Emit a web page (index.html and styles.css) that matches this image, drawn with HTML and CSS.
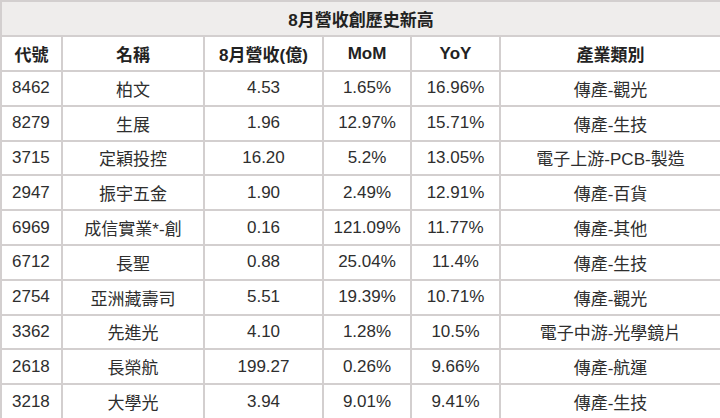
FILE: index.html
```html
<!DOCTYPE html>
<html lang="zh-Hant">
<head>
<meta charset="utf-8">
<link rel="stylesheet" href="styles.css">
</head>
<body>
<table class="tbl">
  <colgroup>
    <col class="c1"><col class="c2"><col class="c3"><col class="c4"><col class="c5"><col class="c6">
  </colgroup>
  <thead>
    <tr class="title"><th colspan="6">8月營收創歷史新高</th></tr>
    <tr class="head"><th>代號</th><th>名稱</th><th>8月營收(億)</th><th>MoM</th><th>YoY</th><th>產業類別</th></tr>
  </thead>
  <tbody>
    <tr><td class="code">8462</td><td>柏文</td><td>4.53</td><td>1.65%</td><td>16.96%</td><td>傳產-觀光</td></tr>
    <tr><td class="code">8279</td><td>生展</td><td>1.96</td><td>12.97%</td><td>15.71%</td><td>傳產-生技</td></tr>
    <tr><td class="code">3715</td><td>定穎投控</td><td>16.20</td><td>5.2%</td><td>13.05%</td><td>電子上游-PCB-製造</td></tr>
    <tr><td class="code">2947</td><td>振宇五金</td><td>1.90</td><td>2.49%</td><td>12.91%</td><td>傳產-百貨</td></tr>
    <tr><td class="code">6969</td><td>成信實業*-創</td><td>0.16</td><td>121.09%</td><td>11.77%</td><td>傳產-其他</td></tr>
    <tr><td class="code">6712</td><td>長聖</td><td>0.88</td><td>25.04%</td><td>11.4%</td><td>傳產-生技</td></tr>
    <tr><td class="code">2754</td><td>亞洲藏壽司</td><td>5.51</td><td>19.39%</td><td>10.71%</td><td>傳產-觀光</td></tr>
    <tr><td class="code">3362</td><td>先進光</td><td>4.10</td><td>1.28%</td><td>10.5%</td><td>電子中游-光學鏡片</td></tr>
    <tr><td class="code">2618</td><td>長榮航</td><td>199.27</td><td>0.26%</td><td>9.66%</td><td>傳產-航運</td></tr>
    <tr><td class="code">3218</td><td>大學光</td><td>3.94</td><td>9.01%</td><td>9.41%</td><td>傳產-生技</td></tr>
  </tbody>
</table>
</body>
</html>
```
FILE: styles.css
```css
html, body {
  margin: 0;
  padding: 0;
  background: #ffffff;
}
body {
  font-family: "Liberation Sans", Arial, "Noto Sans CJK TC", sans-serif;
  color: #2e2e2e;
  font-size: 17px;
}
.tbl {
  border-collapse: collapse;
  width: 720px;
  table-layout: fixed;
}
.c1 { width: 61px; }
.c2 { width: 142px; }
.c3 { width: 119px; }
.c4 { width: 88px; }
.c5 { width: 89px; }
.c6 { width: 221px; }
.tbl th, .tbl td {
  border: 2px solid #d3cfcf;
  text-align: center;
  padding: 0;
  white-space: nowrap;
}
.title th {
  background: #efedec;
  height: 33px;
  font-weight: bold;
  color: #222222;
}
.head th {
  height: 33px;
  font-weight: bold;
  color: #222222;
}
.tbl td {
  height: 32.8px;
}
.tbl td.code {
  text-align: left;
  padding-left: 10px;
}
```
